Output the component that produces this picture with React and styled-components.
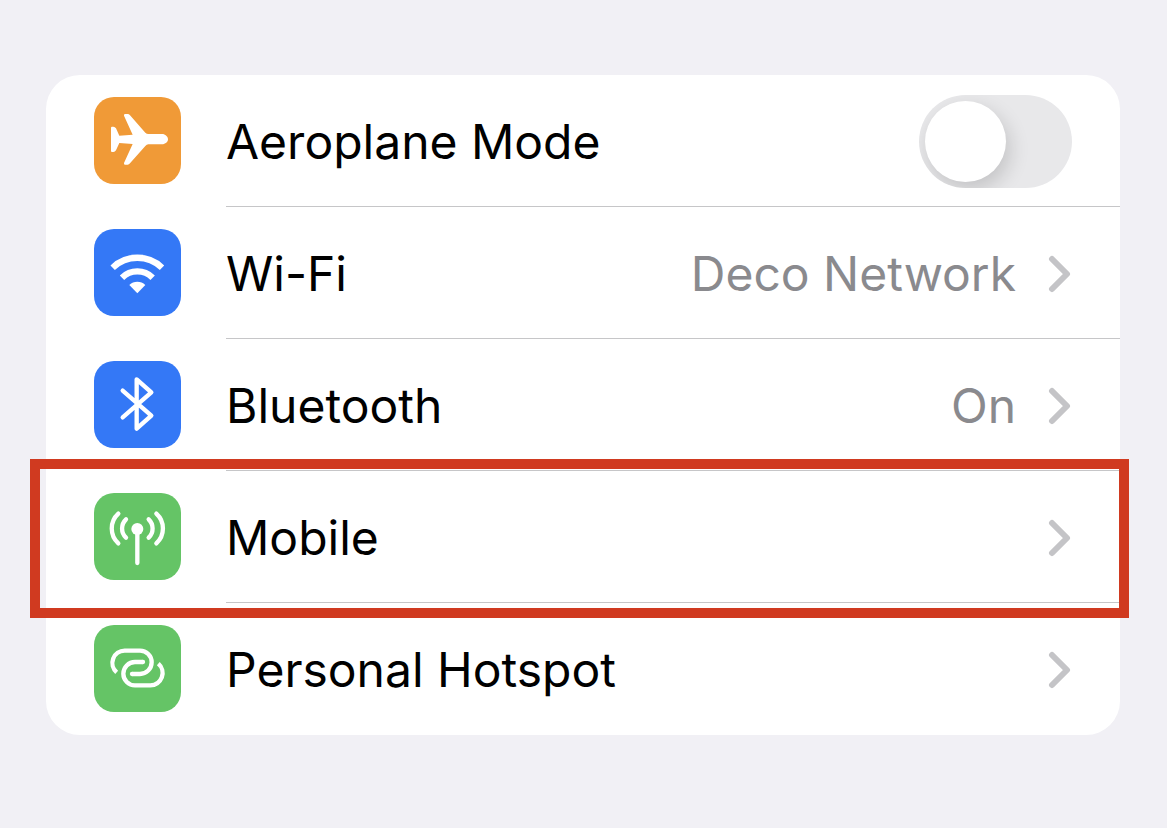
import React from "react";
import styled, { createGlobalStyle } from "styled-components";

const GlobalStyle = createGlobalStyle`
  * {
    box-sizing: border-box;
  }

  body {
    margin: 0;
    background-color: #f1f0f5;
    font-family: Inter, "Liberation Sans", sans-serif;
  }
`;

// All the tile glyphs share one 261 x 261 grid
function PlaneIcon() {
  return (
    <Glyph viewBox="0 0 261 261" aria-hidden="true">
      <path
        fill="#fff"
        d="M116 113 L90 56 Q89 51 93 51 H101 Q105 51 108 55 L154 107 Q158 111 163 111 H204 C214 111 222 119 222 127 C222 135 214 142 204 142 H163 Q158 142 154 147 L108 199 Q105 203 101 203 H93 Q89 203 90 198 L116 141 L76 138 L66 160 Q63 165 58 165 H54 Q51 165 51 161 V93 Q51 89 54 89 H58 Q63 89 66 94 L76 116 Z"
      />
    </Glyph>
  );
}

function WifiIcon() {
  return (
    <Glyph viewBox="0 0 261 261" aria-hidden="true">
      <g fill="none" stroke="#fff" strokeWidth="19">
        <path d="M56 116 A107 107 0 0 1 204 116" />
        <path d="M84 146 A66 66 0 0 1 176 146" />
      </g>
      <path fill="#fff" d="M130 193 L106 168 A35 35 0 0 1 154 168 Z" />
    </Glyph>
  );
}

function BluetoothIcon() {
  return (
    <Glyph viewBox="0 0 261 261" aria-hidden="true">
      <path
        fill="none"
        stroke="#fff"
        strokeWidth="13"
        strokeLinecap="round"
        strokeLinejoin="round"
        d="M86 89 L172 164 L128 203 V55 L172 94 L86 169"
      />
    </Glyph>
  );
}

function AntennaIcon() {
  return (
    <Glyph viewBox="0 0 261 261" aria-hidden="true">
      <circle cx="130" cy="108" r="18" fill="#fff" />
      <g fill="none" stroke="#fff" strokeWidth="13" strokeLinecap="round">
        <path d="M130 108 V210" />
        <path d="M96 79 A38 38 0 0 0 96 134" />
        <path d="M73 62 A60 60 0 0 0 73 151" />
        <path d="M164 79 A38 38 0 0 1 164 134" />
        <path d="M187 62 A60 60 0 0 1 187 151" />
      </g>
    </Glyph>
  );
}

function HotspotIcon() {
  const link = "M68 142 A37 37 0 0 1 92 77 H138 A35 35 0 0 1 138 147 H114";

  return (
    <Glyph viewBox="0 0 261 261" aria-hidden="true">
      <g fill="none" stroke="#fff" strokeWidth="13">
        <path d={link} />
        <path d={link} transform="rotate(180 130.5 129)" />
      </g>
      <circle cx="114" cy="147" r="6.5" fill="#fff" />
      <circle cx="147" cy="111" r="6.5" fill="#fff" />
    </Glyph>
  );
}

function ChevronIcon() {
  return (
    <Chevron viewBox="0 0 24 38" aria-hidden="true">
      <path
        fill="none"
        stroke="#c4c4c7"
        strokeWidth="6"
        strokeLinecap="round"
        strokeLinejoin="round"
        d="M4 4 L19 19 L4 34"
      />
    </Chevron>
  );
}

const ROWS = [
  { id: "wifi", title: "Wi-Fi", value: "Deco Network", color: "#3478f6", Icon: WifiIcon },
  { id: "bluetooth", title: "Bluetooth", value: "On", color: "#3478f6", Icon: BluetoothIcon },
  { id: "mobile", title: "Mobile", color: "#65c466", Icon: AntennaIcon, isMarked: true },
  { id: "hotspot", title: "Personal Hotspot", color: "#65c466", Icon: HotspotIcon },
];

export default function App() {
  return (
    <Page>
      <GlobalStyle />
      <List>
        <Item>
          <SwitchRow htmlFor="aeroplane">
            <Tile color="#f09a37">
              <PlaneIcon />
            </Tile>
            <Content>
              <Title>Aeroplane Mode</Title>
              <Switch id="aeroplane" type="checkbox" role="switch" />
            </Content>
          </SwitchRow>
        </Item>
        {ROWS.map(SettingItem)}
      </List>
    </Page>
  );
}

function SettingItem({ id, title, value, color, Icon, isMarked }) {
  return (
    <Item key={id}>
      <LinkRow href={`#${id}`}>
        <Tile color={color}>
          <Icon />
        </Tile>
        <Content>
          <Title>{title}</Title>
          {value && <Value>{value}</Value>}
          <ChevronIcon />
        </Content>
      </LinkRow>
      {isMarked && <Marker />}
    </Item>
  );
}

const Page = styled.main`
  min-height: 100vh;
  padding: 75px 47px 75px 46px;
`;

const List = styled.ul`
  margin: 0;
  padding: 0;
  list-style: none;
  background-color: #fff;
  border-radius: 34px;
`;

const Glyph = styled.svg`
  display: block;
  width: 100%;
  height: 100%;
`;

const Chevron = styled.svg`
  flex-shrink: 0;
  width: 24px;
  height: 38px;
`;

const Tile = styled.span`
  flex-shrink: 0;
  width: 87px;
  height: 87px;
  margin-top: 22px;
  border-radius: 20px;
  background-color: ${({ color }) => color};
`;

const Content = styled.span`
  flex: 1;
  display: flex;
  align-items: center;
  gap: 32px;
  min-height: 132px;
  padding-top: 2px;
  padding-right: 48px;
  border-bottom: 1px solid #c6c6c8;
`;

const Title = styled.span`
  flex: 1;
  font-size: 48px;
  line-height: 60px;
  color: #000;
`;

const Value = styled.span`
  font-size: 48px;
  line-height: 60px;
  color: #8a8a8e;
`;

const SwitchRow = styled.label`
  display: flex;
  gap: 45px;
  padding-left: 48px;
  cursor: pointer;
`;

const LinkRow = styled.a`
  display: flex;
  gap: 45px;
  padding-left: 48px;
  text-decoration: none;
`;

const Item = styled.li`
  position: relative;

  &:last-child ${Content} {
    border-bottom-color: transparent;
  }
`;

const Switch = styled.input`
  appearance: none;
  flex-shrink: 0;
  display: flex;
  width: 153px;
  height: 93px;
  margin: 0;
  padding: 6px;
  border-radius: 47px;
  background-color: #e8e8ea;
  overflow: hidden;
  cursor: pointer;

  &::before {
    content: "";
    width: 81px;
    height: 81px;
    border-radius: 50%;
    background-color: #fff;
    box-shadow: 4px 8px 20px rgba(0, 0, 0, 0.16);
  }

  &:checked {
    justify-content: flex-end;
    background-color: #65c466;
  }
`;

// Red frame that lies over the row and its neighbours
const Marker = styled.div`
  position: absolute;
  top: -12px;
  right: -9px;
  bottom: -15px;
  left: -16px;
  z-index: 1;
  border: 10px solid #d03a20;
  pointer-events: none;
`;
